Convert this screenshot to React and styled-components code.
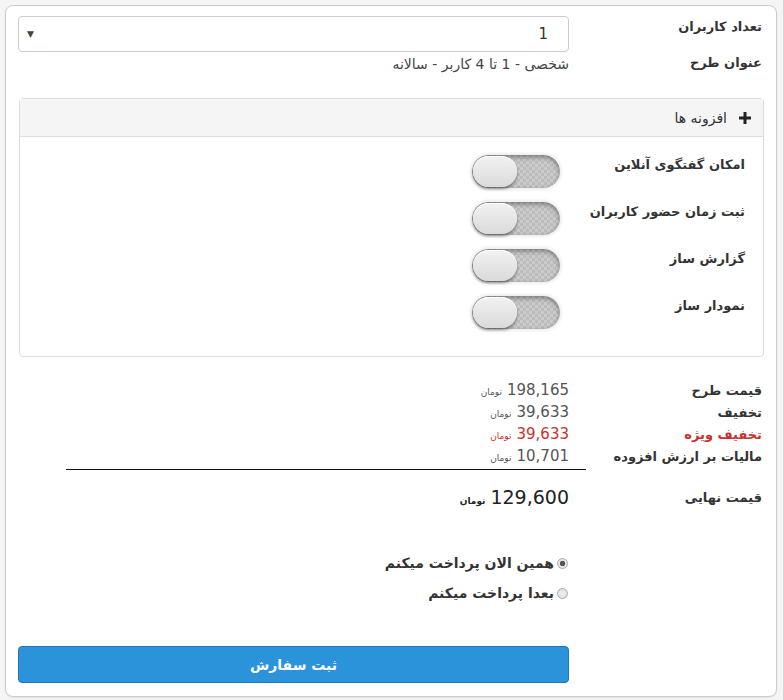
import React from 'react';
import styled, { createGlobalStyle } from 'styled-components';

const GlobalStyle = createGlobalStyle`
  body {
    margin: 0;
    background: #f5f5f5;
    font-family: "DejaVu Sans", "Noto Sans", sans-serif;
    color: #333;
  }
`;

const Card = styled.div`
  direction: rtl;
  margin: 5px 6px 3px 5px;
  background: #fff;
  border: 1px solid #ccc;
  border-radius: 8px;
  padding: 10px 12px 13px 12px;
  box-shadow: 0 1px 2px rgba(0, 0, 0, 0.08);
`;

const Row = styled.div`
  display: grid;
  grid-template-columns: 180px 551px;
  column-gap: 15px;
  align-items: ${(p) => (p.$top ? 'start' : 'center')};
  min-height: ${(p) => p.$h || 22}px;
`;

const Label = styled.div`
  font-size: 13px;
  font-weight: bold;
  color: ${(p) => (p.$red ? '#c9302c' : '#333')};
  padding-right: 2px;
  padding-top: ${(p) => p.$pt || 0}px;
`;

const Select = styled.div`
  height: 34px;
  border: 1px solid #ccc;
  border-radius: 4px;
  display: flex;
  align-items: center;
  justify-content: space-between;
  padding: 0 20px 0 8px;
  font-size: 15px;
  color: #333;
`;

const Arrow = styled.span`
  font-size: 9px;
  color: #444;
`;

const PlanText = styled.div`
  font-size: 14px;
  color: #444;
  padding-top: 2px;
`;

const Panel = styled.div`
  margin-top: 14px;
  border: 1px solid #ddd;
  border-radius: 4px;
  margin-left: 1px;
`;

const PanelHead = styled.div`
  height: 37px;
  background: #f5f5f5;
  border-bottom: 1px solid #ddd;
  display: flex;
  align-items: center;
  gap: 12px;
  padding-right: 12px;
  font-size: 14px;
  color: #333;
`;

const PanelBody = styled.div`
  padding: 16px 16px 25px;
  display: flex;
  flex-direction: column;
  gap: 10px;
`;

const ToggleRow = styled.div`
  display: grid;
  grid-template-columns: 170px 1fr;
  column-gap: 17px;
  align-items: center;
  height: 37px;
`;

const ToggleLabel = styled(Label)`
  margin-top: -14px;
`;

const Track = styled.div`
  width: 88px;
  height: 33px;
  border-radius: 17px;
  position: relative;
  background-color: #c4c4c4;
  background-image: repeating-conic-gradient(#bcbcbc 0 25%, #cbcbcb 0 50%);
  background-size: 6px 6px;
  box-shadow: inset 0 2px 5px rgba(0, 0, 0, 0.4), 0 0 3px 2px rgba(0, 0, 0, 0.07);
`;

const Knob = styled.div`
  position: absolute;
  left: 1px;
  top: 1px;
  width: 44px;
  height: 31px;
  border-radius: 16px;
  background: linear-gradient(#f2f2f2, #dadada);
  box-shadow: 0 2px 3px rgba(0, 0, 0, 0.45), inset 0 1px 0 #fff;
`;

const Prices = styled.div`
  margin-top: 22px;
`;

const Amount = styled.div`
  font-size: ${(p) => (p.$big ? 19 : 15)}px;
  color: ${(p) => (p.$red ? '#c9302c' : p.$big ? '#222' : '#555')};
  display: flex;
  align-items: baseline;
  gap: 5px;
`;

const Unit = styled.span`
  font-size: 9px;
  font-weight: ${(p) => (p.$bold ? 'bold' : 'normal')};
`;

const Line = styled.div`
  height: 1px;
  background: #111;
  margin: 2px 178px 0 48px;
`;

const Radios = styled.div`
  margin-top: 31px;
  padding-right: 196px;
  display: flex;
  flex-direction: column;
  gap: 14px;
`;

const RadioLabel = styled.label`
  display: flex;
  align-items: center;
  gap: 3px;
  font-size: 14px;
  font-weight: bold;
  color: #333;
`;

const Radio = styled.span`
  width: 11px;
  height: 11px;
  border-radius: 50%;
  border: 1px solid #aaa;
  background: radial-gradient(circle, ${(p) => (p.$on ? '#555 0 2.5px, #e6e6e6 3px' : '#eee 0, #ddd 100%')});
  box-sizing: border-box;
`;

const Submit = styled.button`
  margin-top: 45px;
  margin-right: 195px;
  width: 551px;
  height: 37px;
  border: 1px solid #2277bb;
  border-radius: 4px;
  background: #2b93d9;
  color: #fff;
  font-family: inherit;
  font-size: 14px;
  font-weight: bold;
  display: block;
`;

const toggles = ['امکان گفتگوی آنلاین', 'ثبت زمان حضور کاربران', 'گزارش ساز', 'نمودار ساز'];

const prices = [
  { label: 'قیمت طرح', value: '198,165' },
  { label: 'تخفیف', value: '39,633' },
  { label: 'تخفیف ویژه', value: '39,633', red: true },
  { label: 'مالیات بر ارزش افزوده', value: '10,701' },
];

export default function App() {
  return (
    <>
      <GlobalStyle />
      <Card>
        <Row $h={38} $top>
          <Label $pt={3}>تعداد کاربران</Label>
          <Select>
            <span>1</span>
            <Arrow>▼</Arrow>
          </Select>
        </Row>
        <Row $h={30} $top>
          <Label $pt={1}>عنوان طرح</Label>
          <PlanText>شخصی - 1 تا 4 کاربر - سالانه</PlanText>
        </Row>

        <Panel>
          <PanelHead>
            <svg width="12" height="12" viewBox="0 0 12 12">
              <path d="M4.5 0h3v4.5H12v3H7.5V12h-3V7.5H0v-3h4.5z" fill="#222" />
            </svg>
            <span>افزونه ها</span>
          </PanelHead>
          <PanelBody>
            {toggles.map((t) => (
              <ToggleRow key={t}>
                <ToggleLabel>{t}</ToggleLabel>
                <Track>
                  <Knob />
                </Track>
              </ToggleRow>
            ))}
          </PanelBody>
        </Panel>

        <Prices>
          {prices.map((p) => (
            <Row key={p.label} $h={22}>
              <Label $red={p.red}>{p.label}</Label>
              <Amount $red={p.red}>
                {p.value}
                <Unit>تومان</Unit>
              </Amount>
            </Row>
          ))}
          <Line />
          <Row $h={54}>
            <Label>قیمت نهایی</Label>
            <Amount $big>
              129,600
              <Unit $bold>تومان</Unit>
            </Amount>
          </Row>
        </Prices>

        <Radios>
          <RadioLabel>
            <Radio $on />
            همین الان پرداخت میکنم
          </RadioLabel>
          <RadioLabel>
            <Radio />
            بعدا پرداخت میکنم
          </RadioLabel>
        </Radios>

        <Submit>ثبت سفارش</Submit>
      </Card>
    </>
  );
}
